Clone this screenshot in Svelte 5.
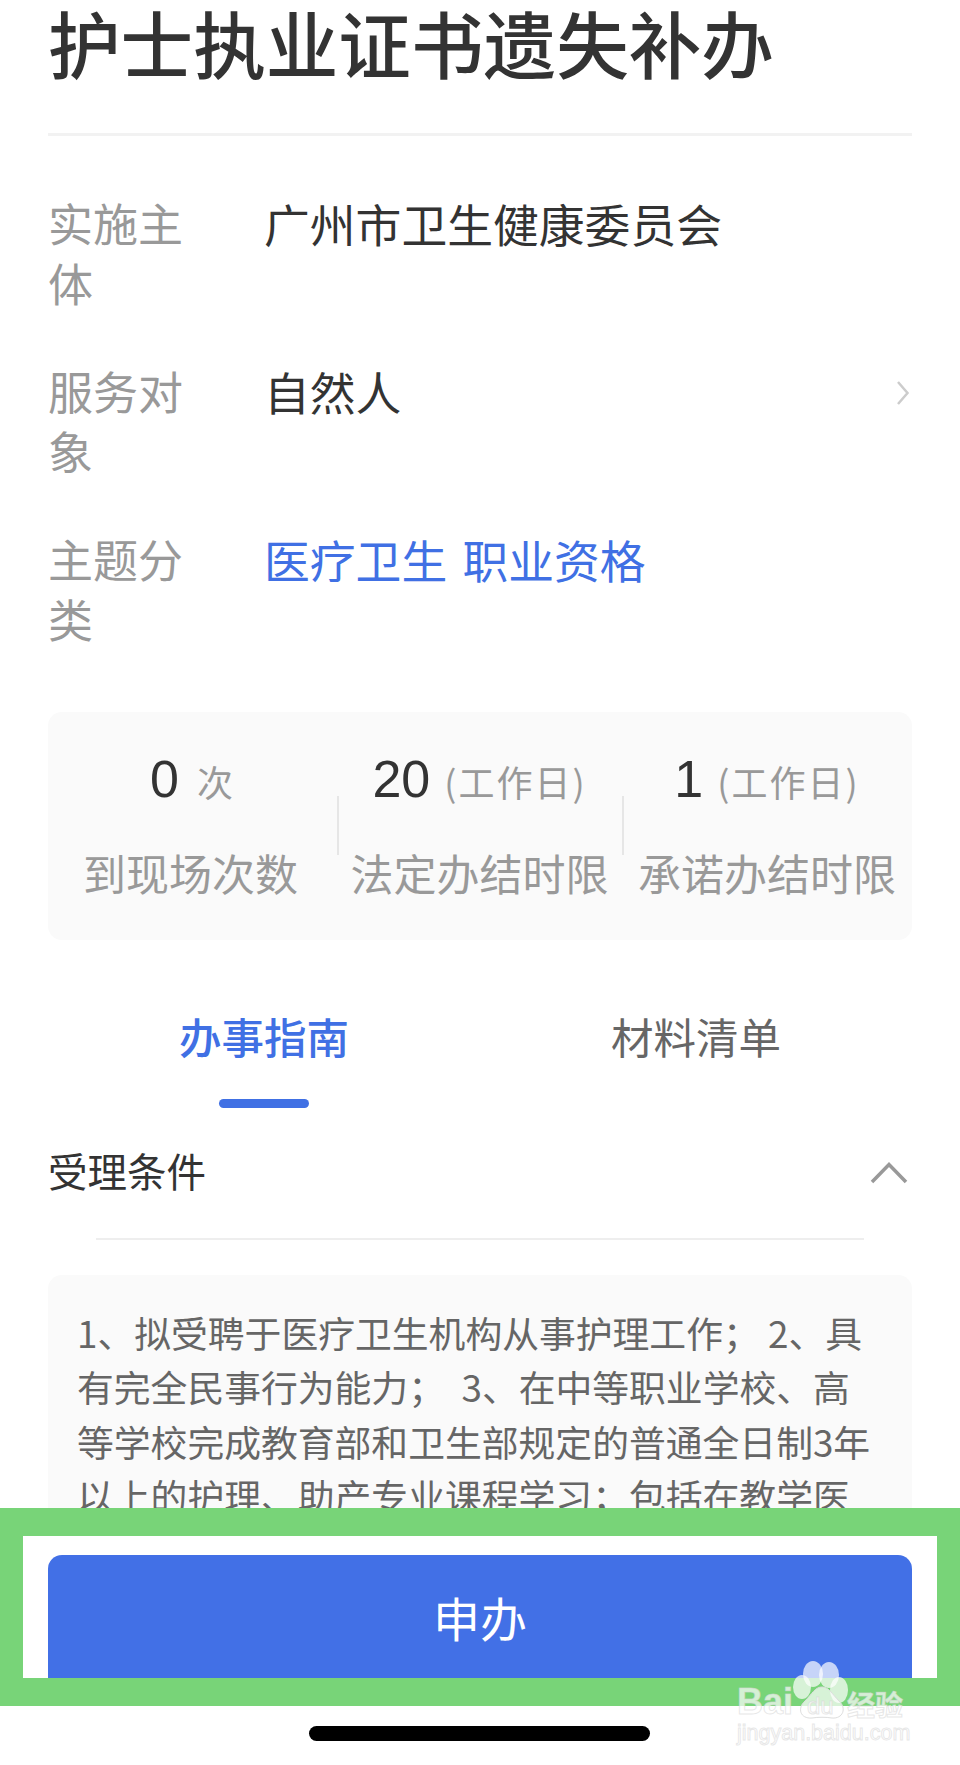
<script>
    const rows = [
        { label: '实施主体', value: '广州市卫生健康委员会' },
        { label: '服务对象', value: '自然人', more: true },
        { label: '主题分类', value: '医疗卫生 职业资格', link: true }
    ]
    const stats = [
        { num: '0', unit: '次', label: '到现场次数' },
        { num: '20', unit: '(工作日)', label: '法定办结时限' },
        { num: '1', unit: '(工作日)', label: '承诺办结时限' }
    ]
    const lines = [
        '1、拟受聘于医疗卫生机构从事护理工作； 2、具',
        '有完全民事行为能力；  3、在中等职业学校、高',
        '等学校完成教育部和卫生部规定的普通全日制3年',
        '以上的护理、助产专业课程学习；包括在教学医'
    ]
</script>

<div class="page">
    <h1>护士执业证书遗失补办</h1>
    <div class="rule"></div>

    <div class="rows">
        {#each rows as row}
            <div class="row">
                <div class="label">{row.label}</div>
                <div class="value" class:link={row.link}>{row.value}</div>
                {#if row.more}
                    <svg class="more" width="14" height="26" viewBox="0 0 14 26">
                        <path d="M2 2 L11.5 13 L2 24" fill="none" stroke="#ccc" stroke-width="2.5" />
                    </svg>
                {/if}
            </div>
        {/each}
    </div>

    <div class="stats">
        {#each stats as stat, i}
            <div class="stat" class:split={i > 0}>
                <div class="num"><b>{stat.num}</b><span class="unit" class:wide={i === 0}>{stat.unit}</span></div>
                <div class="stat-label">{stat.label}</div>
            </div>
        {/each}
    </div>

    <div class="tabs">
        <div class="tab active">办事指南<i></i></div>
        <div class="tab">材料清单</div>
    </div>

    <div class="section">
        <span>受理条件</span>
        <svg width="38" height="22" viewBox="0 0 38 22">
            <path d="M2 20 L19 2.5 L36 20" fill="none" stroke="#999" stroke-width="3.5" />
        </svg>
    </div>
    <div class="section-rule"></div>

    <div class="content">
        {#each lines as line}
            <div>{line}</div>
        {/each}
    </div>

    <div class="frame">
        <div class="apply"><button>申办</button></div>
    </div>

    <div class="home"></div>

    <div class="mark">
        <svg class="paw" width="70" height="70" viewBox="0 0 70 70">
            <g fill="#fff" fill-opacity="0.7">
                <ellipse cx="28" cy="14" rx="10" ry="13" />
                <ellipse cx="44" cy="15" rx="10" ry="13" />
                <ellipse cx="17" cy="27" rx="9" ry="12" />
                <ellipse cx="54" cy="30" rx="9" ry="13" />
                <path d="M37 27 C44 27 47 34 54 41 C62 48 58 59 47 58 C41 57 33 57 27 58 C15 59 12 48 20 41 C27 34 30 27 37 27 Z" stroke="#ddd" />
            </g>
        </svg>
        <span class="bai">Bai</span>
        <span class="du">du</span>
        <span class="jy">经验</span>
        <span class="url">jingyan.baidu.com</span>
    </div>
</div>

<style>
    :global(body) {
        margin: 0;
        background: #fff;
    }

    .page {
        position: relative;
        width: 960px;
        height: 1765px;
        overflow: hidden;
        background: #fff;
        font-family: "Noto Sans CJK SC", "Liberation Sans", sans-serif;
        color: #333;
    }

    h1 {
        margin: 0;
        padding-left: 48px;
        font-size: 72.6px;
        line-height: 84px;
        font-weight: 500;
        white-space: nowrap;
    }

    .rule {
        height: 3px;
        margin: 49px 48px 0;
        background: #f2f2f2;
    }

    .rows {
        display: flex;
        flex-direction: column;
        gap: 48px;
        padding: 57px 48px 0;
    }

    .row {
        display: flex;
        align-items: flex-start;
        font-size: 45px;
        line-height: 60px;
    }

    .label {
        flex: 0 0 140px;
        margin-right: 76px;
        color: #999;
    }

    .value {
        flex: 1;
        font-size: 45.8px;
    }

    .link {
        color: #4070e4;
        word-spacing: 5px;
    }

    .more {
        margin: 19px 2px 0 0;
    }

    .stats {
        display: flex;
        height: 228px;
        margin: 63px 48px 0;
        border-radius: 14px;
        background: #fafafa;
    }

    .stat {
        position: relative;
        flex: 0 0 285px;
        text-align: center;
    }

    .stat:first-child {
        flex-basis: 289px;
    }

    .stat:first-child .stat-label {
        padding-right: 4px;
    }

    .stat:last-child {
        flex-basis: 290px;
    }

    .stat.split::before {
        content: '';
        position: absolute;
        left: 0;
        top: 84px;
        width: 2px;
        height: 59px;
        background: #e6e6e6;
    }

    .num {
        height: 104px;
        padding-top: 37px;
        box-sizing: border-box;
        line-height: 60px;
        white-space: nowrap;
    }

    .num b {
        font-family: "Liberation Sans", sans-serif;
        font-size: 52px;
        font-weight: 400;
    }

    .unit {
        margin-left: 14px;
        font-size: 36px;
        letter-spacing: 2px;
        color: #999;
    }

    .unit.wide {
        margin-left: 18px;
    }

    .stat-label {
        margin-top: 26px;
        font-size: 43px;
        line-height: 60px;
        color: #999;
        white-space: nowrap;
    }

    .tabs {
        display: flex;
        margin: 69px 48px 0;
    }

    .tab {
        position: relative;
        flex: 1;
        height: 99px;
        font-size: 42.5px;
        line-height: 54px;
        text-align: center;
        color: #666;
    }

    .tab.active {
        color: #4070e4;
        font-weight: 500;
    }

    .tab i {
        position: absolute;
        left: 171px;
        bottom: 0;
        width: 90px;
        height: 9px;
        border-radius: 5px;
        background: #4070e4;
    }

    .section {
        display: flex;
        justify-content: space-between;
        align-items: center;
        height: 56px;
        margin: 34px 48px 0;
        padding-right: 4px;
        font-size: 39.5px;
        line-height: 56px;
    }

    .section svg {
        margin-top: 6px;
    }

    .section-rule {
        height: 2px;
        margin: 40px 96px 0;
        background: #eee;
    }

    .content {
        height: 300px;
        margin: 35px 48px 0;
        padding: 30px 29px;
        border-radius: 14px;
        background: #fafafa;
        font-size: 36.8px;
        line-height: 54.3px;
        color: #666;
        white-space: pre;
    }

    .frame {
        position: absolute;
        left: 0;
        top: 1508px;
        width: 960px;
        height: 198px;
        box-sizing: border-box;
        border: solid #78d478;
        border-width: 28px 23px;
        background: #fff;
    }

    .apply {
        height: 100%;
        padding: 19px 25px 0;
        box-sizing: border-box;
        overflow: hidden;
    }

    .apply button {
        display: block;
        width: 100%;
        height: 140px;
        padding: 0 0 16px;
        border: none;
        border-radius: 14px;
        background: #4270e6;
        color: #fff;
        font: 400 47px/60px "Noto Sans CJK SC", sans-serif;
    }

    .home {
        position: absolute;
        left: 309px;
        top: 1726px;
        width: 341px;
        height: 15px;
        border-radius: 8px;
        background: #000;
    }

    .mark {
        position: absolute;
        left: 737px;
        top: 1660px;
        width: 175px;
        height: 90px;
    }

    .paw {
        position: absolute;
        left: 48px;
        top: 0;
    }

    .mark span {
        position: absolute;
        color: rgba(255, 255, 255, 0.7);
        -webkit-text-stroke: 1px rgba(215, 215, 215, 0.6);
        white-space: nowrap;
        font-family: "Liberation Sans", sans-serif;
    }

    .mark .bai {
        left: 0;
        top: 22px;
        font-size: 36px;
        font-weight: 700;
        line-height: 40px;
    }

    .du {
        left: 70px;
        top: 34px;
        font-size: 24px;
        line-height: 24px;
    }

    .mark .jy {
        left: 110px;
        top: 27px;
        font: 700 28px/34px "Noto Sans CJK SC", sans-serif;
    }

    .url {
        left: 0;
        top: 61px;
        font-size: 21.5px;
        line-height: 24px;
    }
</style>
